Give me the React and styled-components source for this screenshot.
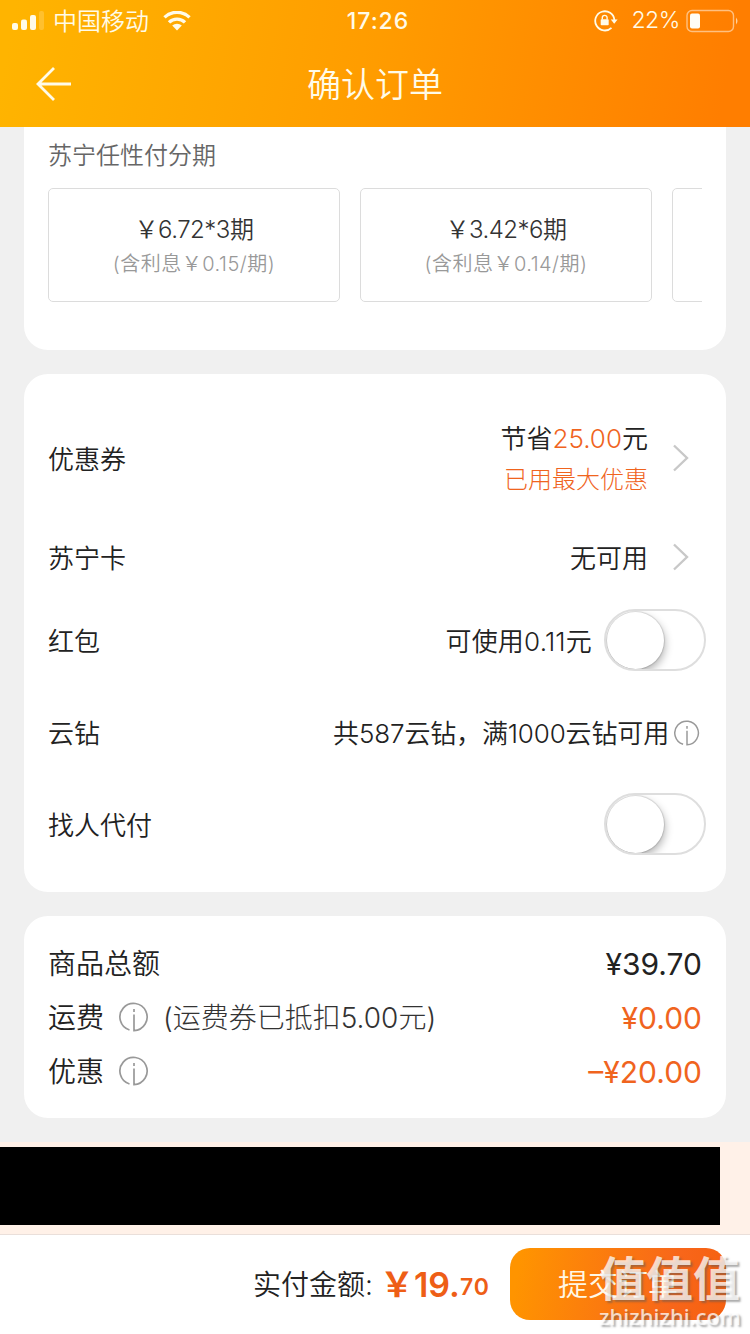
import React from 'react'
import styled, { createGlobalStyle } from 'styled-components'

const GlobalStyle = createGlobalStyle`
  body {
    margin: 0;
    background: #f0f0f0;
    font-family: Inter, "Noto Sans CJK SC", sans-serif;
    color: #222;
  }
  * {
    box-sizing: border-box;
  }
`
const Page = styled.div`
  position: relative;
  width: 750px;
  height: 1334px;
  overflow: hidden;
  display: flex;
  flex-direction: column;
  background: #f0f0f0;
`
const Header = styled.header`
  height: 127px;
  flex-shrink: 0;
  color: #fffbe8;
  background: linear-gradient(100deg, #ffb400 2%, #ff9c00 50%, #ff7e00 96%);
`
const StatusBar = styled.div`
  height: 41px;
  padding: 0 11px 0 12px;
  display: grid;
  grid-template-columns: 1fr auto 1fr;
  align-items: center;
`
const StatusGroup = styled.div`
  display: flex;
  align-items: center;
  justify-content: ${props => props.end ? 'flex-end' : 'flex-start'};
`
const NavBar = styled.div`
  height: 86px;
  padding: 0 35px;
  display: grid;
  grid-template-columns: 40px 1fr 40px;
  align-items: center;
  text-align: center;
`
const Text = styled.span`
  font-size: ${props => props.size || 26}px;
  font-weight: ${props => props.weight || 350};
  letter-spacing: ${props => props.spacing || 0}px;
  color: ${props => props.color || 'inherit'};
  margin-left: ${props => props.left || 0}px;
  padding-top: ${props => props.drop === undefined ? 2 : props.drop}px;
  white-space: nowrap;
  line-height: 1.4;
`
const Card = styled.section`
  margin: 0 24px 24px;
  padding: ${props => props.pad};
  height: ${props => props.height}px;
  flex-shrink: 0;
  background: #fff;
  border-radius: ${props => props.flatTop ? '0 0 24px 24px' : '24px'};
`
const Plans = styled.div`
  display: flex;
  gap: 20px;
  margin-top: 16px;
  overflow: hidden;
`
const Plan = styled.div`
  width: 292px;
  height: 114px;
  flex-shrink: 0;
  border: 1px solid #dcdcdc;
  border-radius: 5px;
  display: flex;
  flex-direction: column;
  align-items: center;
  gap: 3px;
  padding-top: 24px;
`
const Row = styled.div`
  height: ${props => props.height}px;
  display: flex;
  align-items: center;
  justify-content: space-between;
`
const RowValue = styled.div`
  display: flex;
  align-items: center;
  margin-right: ${props => props.right || 0}px;
`
const Stack = styled.div`
  display: flex;
  flex-direction: column;
  align-items: flex-end;
  gap: 6px;
  padding-bottom: 1px;
`
const Accent = styled.span`
  color: #f0641e;
`
const Switch = styled.div`
  width: 102px;
  height: 62px;
  margin: 0 0 2px 12px;
  padding: 1px;
  border: 2px solid #dedede;
  border-radius: 31px;
  overflow: hidden;
  background: #fff;
`
const Knob = styled.div`
  width: 57px;
  height: 57px;
  border-radius: 50%;
  background: #fff;
  box-shadow: 0 0 1px 1px rgba(0, 0, 0, 0.12), 1px 4px 9px rgba(0, 0, 0, 0.3);
`
const Notice = styled.div`
  height: 92px;
  flex-shrink: 0;
  padding-top: 5px;
  background: #fff1e8;
`
const Redacted = styled.div`
  width: 720px;
  height: 78px;
  background: #000;
`
const BottomBar = styled.footer`
  height: 100px;
  flex-shrink: 0;
  padding: 0 24px 2px 0;
  border-top: 1px solid #eadfda;
  background: #fff;
  display: flex;
  align-items: center;
  justify-content: flex-end;
`
const Submit = styled.button`
  width: 216px;
  height: 72px;
  margin-left: 20px;
  padding: 0;
  border: 0;
  border-radius: 20px;
  font-family: inherit;
  color: #fff8e6;
  background: linear-gradient(100deg, #ff9400 5%, #f8661a 75%, #f5600f);
`
const Watermark = styled.div`
  position: absolute;
  right: 7px;
  bottom: 5px;
  width: 144px;
  display: flex;
  flex-direction: column;
  color: rgba(255, 255, 255, 0.75);
  text-shadow: 2px 2px 2px rgba(90, 90, 90, 0.5);
  white-space: nowrap;
`
const MarkTitle = styled.span`
  font: 700 47px/54px "Noto Sans CJK SC", sans-serif;
`
const MarkUrl = styled.span`
  font: 500 22px/26px "Noto Sans", sans-serif;
`
const Icon = styled.svg`
  display: block;
  flex-shrink: 0;
  margin-left: ${props => props.left || 0}px;
  fill: none;
`

const Signal = () => (
  <Icon width='32' height='20' viewBox='0 0 32 20'>
    <g fill='#fffbe8'>
      <rect x='0' y='12' width='6' height='7' rx='2' />
      <rect x='9' y='8.5' width='6' height='10.5' rx='2' />
      <rect x='18' y='4' width='6' height='15' rx='2' />
      <rect x='27' y='0' width='5' height='19' rx='2' opacity='.2' />
    </g>
  </Icon>
)

const Wifi = () => (
  <Icon left={14} width='28' height='20' viewBox='0 0 28 20'>
    <path d='M1.5 6.4a18 18 0 0 1 25 0M6 11.4a11.5 11.5 0 0 1 16 0' stroke='#fffbe8' strokeWidth='3.4' />
    <path d='M9.2 14.6a7 7 0 0 1 9.6 0L14 19.4z' fill='#fffbe8' />
  </Icon>
)

const RotationLock = () => (
  <Icon width='24' height='22' viewBox='0 0 24 22'>
    <path d='M17.5 17.8A9.6 9.6 0 1 1 20.4 10' stroke='#fffbe8' strokeWidth='1.8' />
    <path d='M16.8 9.5h6.8l-3.4 4.3z' fill='#fffbe8' />
    <rect x='6.7' y='9.2' width='8' height='6' rx='.8' fill='#fffbe8' />
    <path d='M8.3 9.5V7.8a2.4 2.4 0 0 1 4.8 0v1.7' stroke='#fffbe8' strokeWidth='1.4' />
  </Icon>
)

const Battery = () => (
  <Icon left={5} width='54' height='24' viewBox='0 0 54 24'>
    <rect x='2' y='1.5' width='46.5' height='21' rx='5' stroke='#ffc080' strokeWidth='1.4' />
    <rect x='5' y='4.5' width='10' height='15' rx='2' fill='#fffdf6' />
    <path d='M51 8.5q3 3.5 0 7z' fill='#ffd09a' />
  </Icon>
)

const Back = () => (
  <Icon width='38' height='38' viewBox='0 0 38 38'>
    <path d='M19 3L3 19l16 16M3 19h33' stroke='#fffbe8' strokeWidth='2.8' />
  </Icon>
)

const Chevron = () => (
  <Icon left={24} width='18' height='30' viewBox='0 0 18 30'>
    <path d='M2 1.5L15 14 2 26.5' stroke='#c8c8c8' strokeWidth='2.4' />
  </Icon>
)

const Info = ({ size = 30, left, color = '#999' }) => (
  <Icon left={left} width={size} height={size} viewBox='0 0 30 30'>
    <path d='M10.5 28A13.6 13.6 0 1 1 15 28.6V12.5M15 7v3' stroke={color} strokeWidth='1.7' />
  </Icon>
)

const plans = [
  { price: '￥6.72*3期', fee: '(含利息￥0.15/期)' },
  { price: '￥3.42*6期', fee: '(含利息￥0.14/期)' },
  { price: '', fee: '' }
]

function App () {
  return (
    <Page>
      <GlobalStyle />
      <Header>
        <StatusBar>
          <StatusGroup>
            <Signal />
            <Text size={24} left={9}>中国移动</Text>
            <Wifi />
          </StatusGroup>
          <Text size={23} weight={550} spacing={1} left={5} drop={1}>17:26</Text>
          <StatusGroup end>
            <RotationLock />
            <Text size={23} weight={350} left={13} drop={0} spacing={-0.4}>22%</Text>
            <Battery />
          </StatusGroup>
        </StatusBar>
        <NavBar>
          <Back />
          <Text size={34} drop={1}>确认订单</Text>
        </NavBar>
      </Header>

      <Card flatTop height={223} pad='11px 24px 0'>
        <Row height={34}>
          <Text size={24} color='#666'>苏宁任性付分期</Text>
        </Row>
        <Plans>
          {plans.map((p, i) => (
            <Plan key={i}>
              <Text size={24} spacing={-0.5} drop={0} color='#333'>{p.price}</Text>
              <Text size={20} spacing={0.5} drop={0} color='#999'>{p.fee}</Text>
            </Plan>
          ))}
        </Plans>
      </Card>

      <Card height={518} pad='25px 20px 0 24px'>
        <Row height={120}>
          <Text>优惠券</Text>
          <RowValue right={16}>
            <Stack>
              <Text drop={0}>节省<Accent>25.00</Accent>元</Text>
              <Text size={24} weight={300} drop={0} color='#f0641e'>已用最大优惠</Text>
            </Stack>
            <Chevron />
          </RowValue>
        </Row>
        <Row height={78}>
          <Text>苏宁卡</Text>
          <RowValue right={16}>
            <Text>无可用</Text>
            <Chevron />
          </RowValue>
        </Row>
        <Row height={88}>
          <Text>红包</Text>
          <RowValue>
            <Text spacing={0.2}>可使用0.11元</Text>
            <Switch><Knob /></Switch>
          </RowValue>
        </Row>
        <Row height={96}>
          <Text>云钻</Text>
          <RowValue right={6}>
            <Text spacing={-0.15}>共587云钻，满1000云钻可用</Text>
            <Info size={26} left={5} />
          </RowValue>
        </Row>
        <Row height={88}>
          <Text>找人代付</Text>
          <Switch><Knob /></Switch>
        </Row>
      </Card>

      <Card height={202} pad='20px 24px 0'>
        <Row height={54}>
          <Text size={28} drop={3}>商品总额</Text>
          <Text size={30} weight={400}>¥39.70</Text>
        </Row>
        <Row height={54}>
          <RowValue>
            <Text size={28} drop={3}>运费</Text>
            <Info left={15} />
            <Text size={28} left={14} drop={3} weight={300} color='#333'>(运费券已抵扣5.00元)</Text>
          </RowValue>
          <Text size={30} weight={400} color='#f0641e'>¥0.00</Text>
        </Row>
        <Row height={54}>
          <RowValue>
            <Text size={28} drop={3}>优惠</Text>
            <Info left={15} />
          </RowValue>
          <Text size={30} weight={400} color='#f0641e'>–¥20.00</Text>
        </Row>
      </Card>

      <Notice>
        <Redacted />
      </Notice>

      <BottomBar>
        <Text size={28} drop={4}>实付金额:</Text>
        <Text size={34} weight={600} left={7} color='#ee5e16'>￥19.</Text>
        <Text size={23} weight={600} spacing={1} drop={8} color='#ee5e16'>70</Text>
        <Submit><Text size={30}>提交订单</Text></Submit>
      </BottomBar>

      <Watermark>
        <MarkTitle>值值值</MarkTitle>
        <MarkUrl>zhizhizhi.com</MarkUrl>
      </Watermark>
    </Page>
  )
}

export default App
